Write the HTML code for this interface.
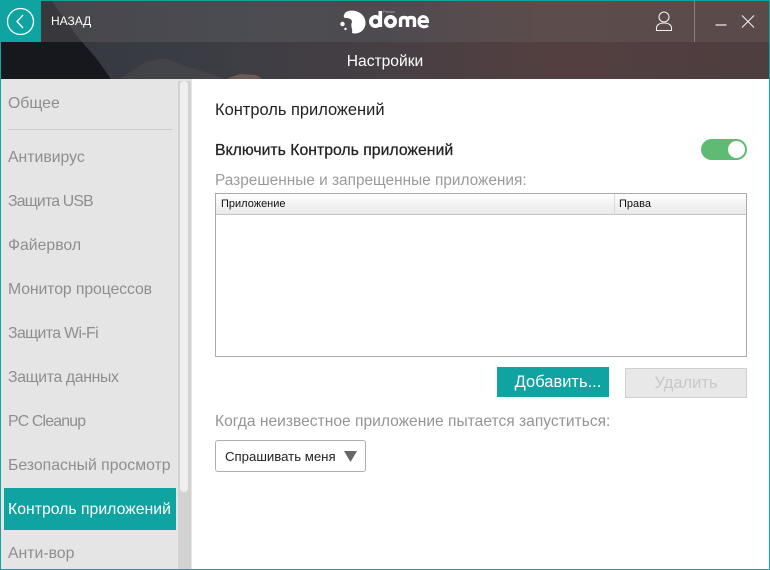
<!DOCTYPE html>
<html><head><meta charset="utf-8">
<style>
html,body{margin:0;padding:0;background:#fff}
#w{position:relative;width:770px;height:570px;overflow:hidden;background:#fff;font-family:"Liberation Sans",sans-serif}
.a{position:absolute;white-space:nowrap}
.n{position:absolute;left:8px;font-size:15.800px;color:#8e8e8e;line-height:20px;white-space:nowrap}
</style></head><body>
<div id="w">
<svg class="a" style="left:0;top:0" width="770" height="79" viewBox="0 0 770 79">
<defs>
<linearGradient id="t" x1="0" x2="1" y1="0" y2="0">
<stop offset="0" stop-color="#45454a"/><stop offset=".3" stop-color="#4b4c52"/><stop offset=".5" stop-color="#4e4b50"/><stop offset=".7" stop-color="#5c4c4c"/><stop offset="1" stop-color="#5a4a4a"/>
</linearGradient>
<linearGradient id="b" x1="0" x2="1" y1="0" y2="0">
<stop offset="0" stop-color="#33363d"/><stop offset=".25" stop-color="#3b3d44"/><stop offset=".5" stop-color="#463f44"/><stop offset=".72" stop-color="#543f40"/><stop offset="1" stop-color="#4e3e3f"/>
</linearGradient>
</defs>
<rect width="770" height="42" fill="url(#t)"/>
<rect y="42" width="770" height="37" fill="url(#b)"/>
<path d="M0 1H52L62 16L80 40L82 42H0Z" fill="#37373c"/>
<path d="M0 42H82L96 58L111 79H0Z" fill="#16181d"/>
<path d="M120 79L145 62L165 58L185 66L205 72L225 79Z" fill="#4b4c50" opacity=".5"/>
<path d="M226 79L240 74L256 75L262 79Z" fill="#6e5a55"/>
<rect x="0" y="0" width="770" height="1" fill="#0fa3a1"/>
<rect x="694" y="1" width="1" height="41" fill="#8a8080"/>
</svg>
<div class="a" style="left:0;top:0;width:41px;height:42px;background:#0fa3a1"></div>
<svg class="a" style="left:0;top:0" width="41" height="42" viewBox="0 0 41 42">
<circle cx="20.500" cy="21.500" r="13" fill="none" stroke="#fff" stroke-width="1.300"/>
<path d="M23 15L17 21.500L23 28" fill="none" stroke="#fff" stroke-width="1.300"/>
</svg>
<div class="a" style="left:51px;top:14px;font-size:12px;line-height:15px;color:#fff">НАЗАД</div>
<svg class="a" style="left:335px;top:5px" width="100" height="32" viewBox="0 0 100 32">
<path d="M12 6.500C21 3.500 30 9 30.500 17C31 25 24 30 17 28C18 24 15 21 17 17C17 13.500 13 13 10 13C7.500 12 9 8 12 6.500Z" fill="#fff"/>
<circle cx="7.500" cy="19" r="2.200" fill="#fff"/>
<circle cx="10.500" cy="24" r="1.200" fill="#fff"/>
<g transform="translate(0,-3)">
<circle cx="40.500" cy="19.500" r="4.600" fill="none" stroke="#fff" stroke-width="3.800"/>
<rect x="43.500" y="9" width="3.600" height="16" fill="#fff"/>
<circle cx="55.500" cy="19.500" r="4.600" fill="none" stroke="#fff" stroke-width="3.800"/>
<path d="M65.500 25V18Q65.500 15.500 69 15.500Q72.500 15.500 72.500 18V25M72.500 18Q72.500 15.500 76 15.500Q79.500 15.500 79.500 18V25" fill="none" stroke="#fff" stroke-width="3.400"/>
<path d="M84 19.500H92.500C92.500 12.500 83.500 13.500 84 19.500C84 25.500 90 25.500 93 23.500" fill="none" stroke="#fff" stroke-width="3"/>
</g>
<text x="48" y="8" font-size="4" fill="#aaa" font-family="Liberation Sans, sans-serif">Panda</text>
</svg>
<svg class="a" style="left:650px;top:8px" width="110" height="26" viewBox="0 0 110 26">
<circle cx="14" cy="9" r="5" fill="none" stroke="#eee" stroke-width="1.100"/>
<path d="M6.500 22.500V20C6.500 17 9.500 15 14 15C18.500 15 21.500 17 21.500 20V22.500Z" fill="none" stroke="#eee" stroke-width="1.100"/>
<path d="M65.500 17H76.500" stroke="#eee" stroke-width="1.200"/>
<path d="M92 7.500L104 19.500M104 7.500L92 19.500" stroke="#eee" stroke-width="1.100"/>
</svg>
<div class="a" style="left:0;width:770px;text-align:center;top:53px;font-size:15.600px;line-height:18px;color:#fff">Настройки</div>

<div class="a" style="left:0;top:79px;width:192px;height:491px;background:#e5e5e5"></div>
<div class="a" style="left:178px;top:81px;width:13px;height:489px;background:#d2d2d2"></div>
<div class="a" style="left:180px;top:81px;width:8px;height:411px;background:#efefef;border-radius:4px"></div>
<div class="a" style="left:8px;top:129px;width:164px;height:1px;background:#cbcbcb"></div>
<div class="a" style="left:4px;top:488px;width:172px;height:42px;background:#0fa3a1"></div>
<div class="n" style="top:94px">Общее</div>
<div class="n" style="top:148px">Антивирус</div>
<div class="n" style="top:192px;letter-spacing:-.8px">Защита USB</div>
<div class="n" style="top:236px">Файервол</div>
<div class="n" style="top:280px;letter-spacing:-.1px">Монитор процессов</div>
<div class="n" style="top:324px;letter-spacing:-.6px">Защита Wi-Fi</div>
<div class="n" style="top:368px;letter-spacing:-.35px">Защита данных</div>
<div class="n" style="top:412px;letter-spacing:-.8px">PC Cleanup</div>
<div class="n" style="top:456px">Безопасный просмотр</div>
<div class="n" style="top:500px;color:#fff">Контроль приложений</div>
<div class="n" style="top:544px">Анти-вор</div>

<div class="a" style="left:215px;top:100px;font-size:16.450px;line-height:20px;color:#222">Контроль приложений</div>
<div class="a" style="left:215px;top:141px;font-size:15.800px;line-height:20px;color:#222;-webkit-text-stroke:.25px #222">Включить Контроль приложений</div>
<div class="a" style="left:701px;top:139px;width:46px;height:21px;background:#5dbb73;border-radius:11px"></div>
<div class="a" style="left:728px;top:141px;width:17px;height:17px;background:#fff;border-radius:50%"></div>
<div class="a" style="left:215px;top:171px;font-size:15.400px;line-height:20px;color:#9a9a9a">Разрешенные и запрещенные приложения:</div>

<div class="a" style="left:215px;top:193px;width:530px;height:162px;border:1px solid #a9a9ae;background:#fff"></div>
<div class="a" style="left:216px;top:194px;width:530px;height:21px;background:linear-gradient(#fff,#f3f3f3 50%,#eaeaea);border-bottom:1px solid #c5c5c5;box-sizing:border-box"></div>
<div class="a" style="left:614px;top:194px;width:1px;height:21px;background:#d8d8d8"></div>
<div class="a" style="left:221px;top:197px;font-size:11px;line-height:14px;color:#111">Приложение</div>
<div class="a" style="left:619px;top:197px;font-size:11px;line-height:14px;color:#111">Права</div>

<div class="a" style="left:497px;top:367px;width:112px;height:30px;background:#0fa3a1;color:#fff;font-size:16.500px;line-height:31px;text-align:center;text-indent:10px">Добавить...</div>
<div class="a" style="left:625px;top:368px;width:120px;height:28px;background:#e8e8e8;border:1px solid #d0d0d0;color:#c8c8c8;font-size:16.500px;line-height:29px;text-align:center">Удалить</div>
<div class="a" style="left:215px;top:412px;font-size:15.600px;line-height:20px;color:#949494">Когда неизвестное приложение пытается запуститься:</div>
<div class="a" style="left:215px;top:440px;width:149px;height:30px;border:1px solid #aeaeae;border-radius:3px;background:#fff"></div>
<div class="a" style="left:225px;top:449px;font-size:13.200px;line-height:16px;color:#222">Спрашивать меня</div>
<svg class="a" style="left:343px;top:450px" width="15" height="13" viewBox="0 0 15 13"><path d="M1 1H14L7.500 12Z" fill="#666"/></svg>

<div class="a" style="left:0;top:0;width:1px;height:570px;background:#0fa3a1"></div>
<div class="a" style="left:769px;top:0;width:1px;height:570px;background:#0fa3a1"></div>
<div class="a" style="left:0;top:569px;width:770px;height:1px;background:#0fa3a1"></div>
</div>
</body></html>
